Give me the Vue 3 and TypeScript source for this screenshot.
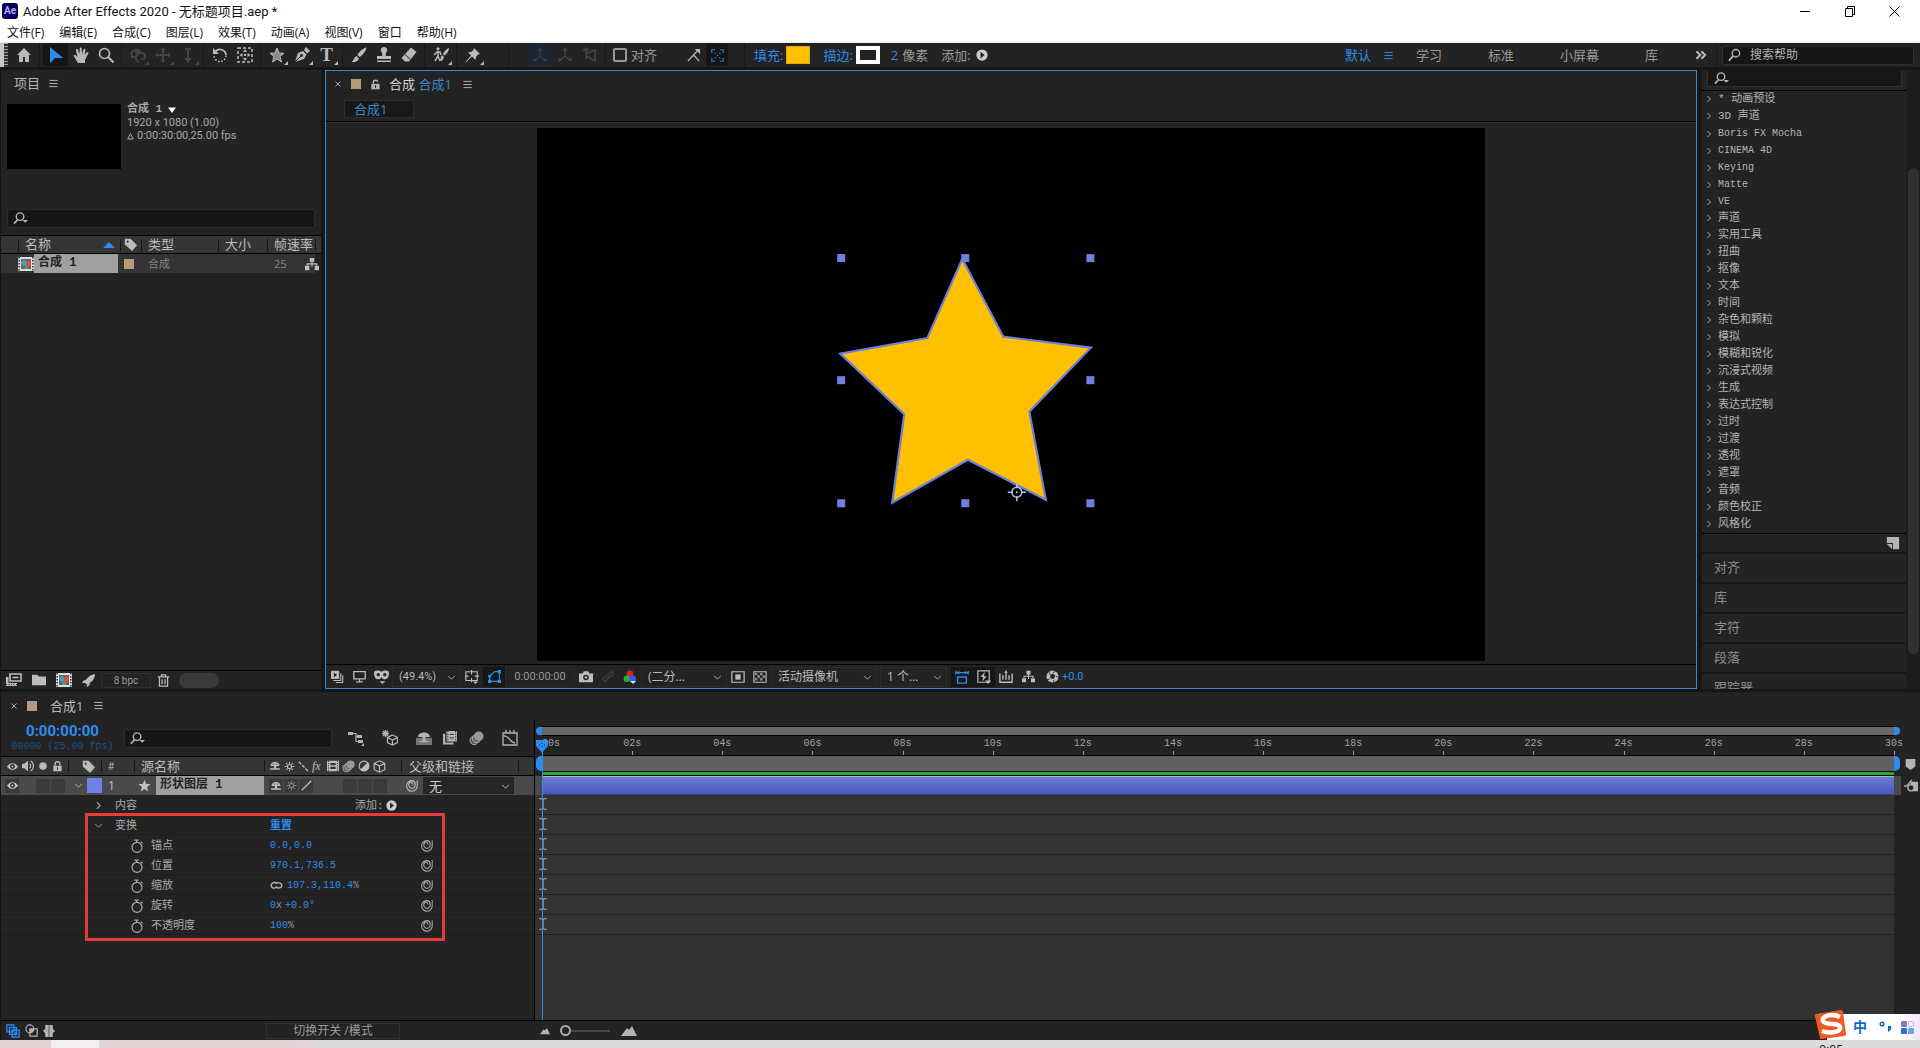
<script setup lang="ts">
import { h, ref } from 'vue'

interface Prop {
  label: string
  kind: 'pair' | 'scale' | 'rotation' | 'percent'
  value: string
}

const glyphs: Record<string, string> = {
  home: '<path fill="currentColor" d="M8 1 1 8h2v7h4v-5h2v5h4V8h2z"/>',
  select: '<path fill="#2d8ceb" d="M2 0v16l5-5h8z"/>',
  hand: '<path fill="currentColor" d="M5 16 1 9.500C0 8 2 7 3 8.500L4.500 10 3 3.500c-.3-1.500 1.500-2 2-.5L6.500 7 6.700 1.500c0-1.500 2-1.500 2 0L9 7l1.500-4.500c.5-1.500 2.200-.8 1.900.6L11.500 8l2-2.500c1-1.200 2.500-.3 1.800 1L12 13v3z"/>',
  zoom: '<circle cx="6.500" cy="6.500" r="5" fill="none" stroke="currentColor" stroke-width="1.600"/><path stroke="currentColor" stroke-width="2" d="m10 10 5.500 5.500"/>',
  search: '<circle cx="9" cy="6" r="4.300" fill="none" stroke="currentColor" stroke-width="1.500"/><path stroke="currentColor" stroke-width="2" d="M6 9 1 14.500"/>',
  searchMenu: '<circle cx="7.500" cy="6" r="4" fill="none" stroke="currentColor" stroke-width="1.500"/><path stroke="currentColor" stroke-width="1.800" d="M5 9 1 13.500"/><path fill="currentColor" d="M10 9.500h6l-3 3z"/>',
  orbit: '<path fill="none" stroke="currentColor" stroke-width="2" d="M11 12c4 1 5-3 3-5S9 6 7 8s-1 6 2 7M2 9C0 5 4 2 8 3M1 10l5 0"/><circle cx="8" cy="5" r="3" fill="currentColor"/>',
  pan: '<path stroke="currentColor" stroke-width="2" d="M8 1v14M1 8h14"/><path fill="currentColor" d="m8 0 2.500 3h-5zM8 16l2.500-3h-5zM0 8l3-2.500v5zM16 8l-3-2.500v5z"/>',
  dolly: '<path stroke="currentColor" stroke-width="1.800" d="M8 3v10M5 2h6"/><path fill="currentColor" d="m8 16 4-5H4zM8 0l2 3H6z"/>',
  rotate: '<path fill="none" stroke="currentColor" stroke-width="1.800" d="M3.500 4.500A6 6 0 0 1 14 8"/><path fill="none" stroke="currentColor" stroke-width="1.600" stroke-dasharray="1.600 1.600" d="M14 8.500A6 6 0 0 1 2 8.500"/><path fill="currentColor" d="M1 1v6h6z"/>',
  anchorTool: '<path fill="none" stroke="currentColor" stroke-width="1.500" stroke-dasharray="3 2" d="M1 1h14v14H1z"/><path fill="currentColor" d="m8 2 2 3H6zM8 14l2-3H6zM2.500 8l3-2v4zM13.500 8l-3-2v4zM7 7h2v2H7z"/>',
  star: '<path fill="#8a8a8a" stroke="currentColor" d="m8 1 2 5 5 .3-4 3.200 1.500 5.500L8 12l-4.500 3L5 9.500 1 6.300 6 6z"/>',
  solidStar: '<path fill="currentColor" d="m8 1 2 5 5.500.3-4.300 3.400 1.500 5.600L8 12.200 3.300 15.300l1.500-5.600L.5 6.300 6 6z"/>',
  pen: '<path fill="currentColor" d="M1 15 4 6l5-2 3.500 3.500L10 12zM10 3l2-3 4 4-3 2.500z"/><circle cx="7.500" cy="8.500" r="1.400" fill="#232323"/><path stroke="#232323" d="m1 15 6-6"/>',
  brush: '<path fill="currentColor" d="M15.500.5C12 1 8 5 6.500 8l2 2C12 8 15 4 15.500.5zM5.500 9 8 11.500C7 15 3 15.500.5 15 3 13.500 3 10 5.500 9z"/>',
  stamp: '<path fill="currentColor" d="M8 0c-3 0-4 3-2.500 5C6.300 6.500 6.500 8 6 9H1v3h14V9h-5c-.5-1-.3-2.500.5-4C12 3 11 0 8 0zM1 13.500h14V15H1z"/>',
  eraser: '<path fill="currentColor" d="m10 .5 5.500 4.500L8 14.500H4L.5 11z"/><path stroke="#232323" d="m4 7.500 5.500 5"/>',
  roto: '<path fill="none" stroke="currentColor" stroke-width="1.500" d="M5 4v5l-3 5M5 9l2 5M1 8l3-3h3l1 3"/><circle cx="5" cy="1.800" r="1.600" fill="currentColor"/><path fill="currentColor" d="M16 1c-3 1-5 4-6 6l1.500 1.500C14 7 16 4 16 1zM9 8l2 2c-1 4-3 4-4.500 4C8 12 7.500 9.500 9 8z"/>',
  pin: '<path fill="currentColor" d="m9 1 6 6-2 .5L11 10l-.5 3L7 9.500 1 15.500l-.500-.5L6 8.500 3 5.500 6 5l2.500-2z"/>',
  axis: '<path stroke="currentColor" stroke-width="1.500" fill="none" d="M8 3v6L3 13M8 9l5 4"/><path fill="currentColor" d="m8 0 2.500 4h-5zM1 14.500l1-4 3 3zM15 14.500l-1-4-3 3z"/>',
  axisView: '<path stroke="currentColor" stroke-width="1.500" fill="none" d="M4 2v10M4 9l9 5V3L4 7M1 4l3-3 3 3"/>',
  snapEdge: '<path stroke="currentColor" stroke-width="1.500" fill="none" d="M1 15 7.500 8 14 15M7.500 8 12 3"/><path fill="currentColor" d="M9 1h6v6z"/>',
  snapBox: '<path fill="none" stroke="currentColor" stroke-width="1.300" d="M1 5V1h4M11 1h4v4M15 11v4h-4M5 15H1v-4"/><path fill="currentColor" d="M4.500 4.500H6V6H4.500zM10 4.500h1.500V6H10zM4.500 10H6v1.500H4.500zM10 10h1.500v1.500H10zM7.200 7.200h1.600v1.600H7.200z"/>',
  playDot: '<circle cx="8" cy="8" r="7.500" fill="currentColor"/><path fill="#232323" d="M6 3.500 11.500 8 6 12.500z"/>',
  menu: '<path stroke="currentColor" stroke-width="1.400" d="M2 3.500h12M2 8h12M2 12.500h12"/>',
  more: '<path fill="none" stroke="currentColor" stroke-width="2.600" d="m2 3 5 5-5 5M8.500 3l5 5-5 5"/>',
  lock: '<path fill="currentColor" d="M2 7h12v8H2z"/><path fill="none" stroke="currentColor" stroke-width="2" d="M5 7V4c0-3 6-3 6 0"/><path stroke="#232323" stroke-width="1.500" d="M8 9v4"/>',
  lockShut: '<path fill="currentColor" d="M2 7h12v8H2z"/><path fill="none" stroke="currentColor" stroke-width="2" d="M4.500 7V4c0-4 7-4 7 0v3"/><path stroke="#333" stroke-width="1.500" d="M8 9v4"/>',
  tag: '<path fill="currentColor" d="M1 1h7l8 8-6 7L1 8z"/><circle cx="4.500" cy="4.500" r="1.300" fill="#333"/>',
  up: '<path fill="#2d8ceb" d="m8 4 8 8H0z"/>',
  down: '<path fill="#fff" d="M0 3h16L8 14z"/>',
  comp: '<path fill="#ddd" d="M0 1h16v14H0z"/><path stroke="#333" stroke-width="1.500" stroke-dasharray="1.500 1.500" d="M1.200 1v14M14.800 1v14"/><path fill="#5d686e" d="M3 3h10v10H3z"/><circle cx="6" cy="7" r="2.800" fill="#3fa3c4"/><path fill="#d9503c" d="M8 5h5v5H8z"/><path fill="#4ea357" d="m8 8 3 5H6z"/>',
  tree: '<path fill="currentColor" d="M5.500 1h5v4.500h-5zM0 10h5v5H0zM11 10h5v5h-5z"/><path fill="none" stroke="currentColor" stroke-width="1.300" d="M8 5v5M2.500 10V7.800h11V10M8 8v3"/>',
  interpret: '<path fill="none" stroke="currentColor" stroke-width="1.600" d="M4 2h11v7H4z"/><path stroke="currentColor" stroke-width="1.500" d="M6.500 5.500h6"/><path fill="currentColor" d="M0 5h2.500v6H11v3H0z"/><path stroke="#232323" stroke-dasharray="1 1.500" d="M0 12.500h11"/>',
  folder: '<path fill="currentColor" d="M0 2h6l2 2h8v10H0z"/>',
  rocket: '<path fill="currentColor" d="M16 0C10 1 7 4 5 7L2 8l-2 3h4l2 2v3l3-2 .5-3C13 9 15.500 6 16 0z"/>',
  trash: '<path fill="none" stroke="currentColor" stroke-width="1.600" d="M1 3.500h14M5.500 3V1h5v2M3 4v11h10V4M6.200 6.500v6M9.800 6.500v6"/>',
  preview: '<path fill="currentColor" d="M0 1h10v10H0z"/><path fill="#232323" d="m3.500 3 4 3-4 3z"/><path fill="none" stroke="currentColor" stroke-width="1.300" d="M12 4v9H3M14.500 6.500v9H6"/>',
  monitor: '<path fill="none" stroke="currentColor" stroke-width="1.600" d="M1 2h14v9H1zM8 11v3.500M4 14.500h8"/>',
  mask: '<path fill="currentColor" d="M0 4c0-3 5-3 8-1 3-2 8-2 8 1 0 5-2 7-5 7-2 0-2-2-3-2s-1 2-3 2c-3 0-5-2-5-7z"/><circle cx="4.500" cy="6" r="1.800" fill="#232323"/><circle cx="11.500" cy="6" r="1.800" fill="#232323"/><path fill="currentColor" d="M6 13h6l-3 3z"/>',
  chevron: '<path fill="none" stroke="currentColor" stroke-width="1.500" d="m2 5 6 6 6-6"/>',
  chevronRight: '<path fill="none" stroke="currentColor" stroke-width="1.900" d="m5 2 6 6-6 6"/>',
  grid: '<path fill="none" stroke="currentColor" stroke-width="1.300" d="M1 2h13v10H1zM7.500 0v5M7.500 9v5M0 7h4M11 7h5"/><path fill="currentColor" d="M9 13h6l-3 3z"/>',
  maskPath: '<path fill="none" stroke="#2d8ceb" stroke-width="1.400" d="M2 14V8l6-6h6v12z"/><path fill="#2d8ceb" d="M0 12h4v4H0zM12 12h4v4h-4zM12 0h4v4h-4zM0 6h4v3H0z"/>',
  camera: '<path fill="currentColor" d="M0 4h4l1.500-2.500h5L12 4h4v10H0z"/><circle cx="8" cy="8.500" r="3.200" fill="#232323"/><circle cx="8" cy="8.500" r="1.500" fill="currentColor"/>',
  link: '<path fill="none" stroke="currentColor" stroke-width="1.700" d="m7 7 3-4c2-2 5 1 3 3L9 9M9 8l-4 5c-2 2-5-1-3-3l4-4"/>',
  rgb: '<circle cx="8" cy="4.500" r="3.800" fill="#e12020"/><circle cx="4.500" cy="10" r="3.800" fill="#1fb432"/><circle cx="11" cy="10" r="3.800" fill="#3555ff"/><path fill="#ddd" d="M8 12.500h7L11.500 16z"/>',
  roi: '<path fill="none" stroke="currentColor" stroke-width="1.400" d="M1 2h14v12H1z"/><path fill="currentColor" d="M5 5h6v6H5z"/>',
  checker: '<path fill="none" stroke="currentColor" stroke-width="1.300" d="M1 2h14v12H1z"/><path fill="#888" d="M2 3h3v3H2zM8 3h3v3H8zM5 6h3v3H5zM11 6h3v3h-3zM2 9h3v3H2zM8 9h3v3H8z"/>',
  aspect: '<path fill="none" stroke="#2d8ceb" stroke-width="1.700" d="M3 8h10v7H3zM1 1v4M15 1v4M1 3h14"/><path fill="#2d8ceb" d="m2 3 3-2.500v5zM14 3l-3-2.500v5z"/>',
  fast: '<path fill="none" stroke="currentColor" stroke-width="1.400" d="M1 1h13v13H1z"/><path fill="currentColor" d="m9 2-5 6h3l-1 5 5-6H8zM9 12h7l-3.500 4z"/>',
  timelineIcon: '<path fill="none" stroke="currentColor" stroke-width="1.600" d="M1 4v10h14V4M4.500 6v5M8 2v9M11.500 6v5"/><path fill="currentColor" d="m8 0 2 3H6z"/>',
  aperture: '<circle cx="8" cy="8" r="5.200" fill="none" stroke="currentColor" stroke-width="4.500"/><path stroke="#232323" d="m8 4 4-3M12 7l4 3M10 12l-1 4M5 11l-4 1M5 6 3 1"/>',
  close: '<path stroke="currentColor" stroke-width="1.800" d="m3 3 10 10M13 3 3 13"/>',
  flow: '<path fill="currentColor" d="M0 2h5v3H0zM9 5h5v3H9zM10 10h5v3h-5z"/><path fill="none" stroke="currentColor" stroke-width="1.200" d="M5 3.500h3v8h3M8 6.500h2"/><path fill="currentColor" d="M13 16l3-3v3z"/>',
  draft3d: '<path fill="none" stroke="currentColor" stroke-width="1.300" d="m10.500 5 5 2.500v5L10.500 15l-5-2.500v-5zM5.500 7.500l5 2.500 5-2.500M10.500 10v5"/><path stroke="currentColor" stroke-width="1.400" d="M3.500 0v7M0 3.500h7M1 1l5 5M6 1 1 6"/>',
  shy: '<path fill="currentColor" d="M2 8c0-7 12-7 12 0H9.500v3h5v2h-13v-2h5V8z"/><path stroke="#232323" d="M5 5.500h2M9 5.500h2"/>',
  shyBar: '<path fill="#777" d="M0 8h16v7H0z"/><path fill="currentColor" d="M2 7c0-6 12-6 12 0H9.500v4h3v1h-9v-1h3V7z"/>',
  frames: '<path fill="currentColor" d="M4 0h12v12H4z"/><path stroke="#232323" stroke-width="1.200" stroke-dasharray="1.500 1.500" d="M5.500 0v12M14.500 0v12"/><path stroke="#232323" d="M7.500 4h5M7.500 8h5"/><path fill="currentColor" d="M0 3h2.500v10H12v2.500H0z"/>',
  film: '<path fill="currentColor" d="M0 1h16v14H0z"/><path stroke="#333" stroke-width="1.300" stroke-dasharray="1.500 1.500" d="M2 1v14M14 1v14"/><path fill="#333" d="M4.500 4h7v3h-7zM4.500 9h7v3h-7z"/>',
  blur: '<circle cx="5.500" cy="10" r="4.500" fill="#555" stroke="currentColor"/><circle cx="8" cy="8" r="4.500" fill="#666" stroke="currentColor"/><circle cx="10.500" cy="5.500" r="5" fill="#999"/>',
  graph: '<path fill="none" stroke="currentColor" stroke-width="1.300" d="M1 3h14v12H1zM4 0v3M8 0v3M12 0v3M1 6c7-1 6 7 12 7"/>',
  eye: '<path fill="currentColor" d="M0 8c4-6.500 12-6.500 16 0-4 6.500-12 6.500-16 0z"/><circle cx="8" cy="8" r="3.500" fill="#303030"/><circle cx="8" cy="8" r="1.300" fill="currentColor"/>',
  speaker: '<path fill="currentColor" d="M0 5h3l5-4v14l-5-4H0z"/><path fill="none" stroke="currentColor" stroke-width="1.600" d="M10 5c2 1 2 5 0 6M11.500 1.500c5 2 5 11 0 13"/>',
  dot: '<circle cx="8" cy="8" r="6" fill="currentColor"/>',
  sun: '<circle cx="8" cy="8" r="3" fill="none" stroke="currentColor" stroke-width="1.500"/><path stroke="currentColor" stroke-width="1.500" d="M8 1v3M8 12v3M1 8h3M12 8h3M3 3l2 2M11 11l2 2M13 3l-2 2M5 11l-2 2"/>',
  quality: '<path stroke="currentColor" stroke-width="2" stroke-dasharray="5 2" d="m1 1 14 14"/>',
  slash: '<path stroke="currentColor" stroke-width="1.800" d="M1 15 15 1"/>',
  adjust: '<circle cx="8" cy="8" r="6.500" fill="none" stroke="currentColor" stroke-width="1.500"/><path fill="currentColor" d="M13 3A7 7 0 1 1 3 13z"/>',
  cube: '<path fill="none" stroke="currentColor" stroke-width="1.400" d="m8 1 6.500 3v8L8 15l-6.500-3V4zM1.500 4 8 7.500 14.500 4M8 7.500V15"/>',
  spiral: '<path fill="none" stroke="currentColor" stroke-width="1.300" d="M15 1.500V8.500A6.500 6.500 0 1 1 8 2c3 0 4.500 2.200 4.500 4.800a4 4 0 1 1-6.500-2.500c2-1 4 .5 3.500 2.700"/>',
  watch: '<circle cx="8" cy="9.500" r="5.700" fill="none" stroke="currentColor" stroke-width="1.400"/><path fill="none" stroke="currentColor" stroke-width="1.500" d="M5 1.200h5M7.500 1v3M12.500 3l2 2"/>',
  chain: '<path fill="none" stroke="currentColor" stroke-width="1.600" d="M9 5.500C7 3.500 1.500 4 1.500 8S7 12 9 9.500M7 9.500c2 2.500 7.500 2 7.500-1.500S9 3.500 7 6"/>',
  beam: '<path fill="none" stroke="currentColor" stroke-width="1.500" d="M3 1h3.500L8 2l1.500-1H13M8 2v12M3 15h3.500L8 14l1.500 1H13"/>',
  shield: '<path fill="currentColor" d="M1 0h14v11l-7 5-7-5z"/>',
  keyNav: '<path fill="currentColor" d="M7 3h9v11H9z"/><circle cx="8" cy="10" r="3.500" fill="#232323" stroke="currentColor" stroke-width="1.500"/><path fill="none" stroke="currentColor" stroke-width="1.500" d="M0 8h3L9 1"/>',
  layers: '<path fill="#17324d" stroke="#2d8ceb" stroke-width="1.400" d="M1 1h8v8H1zM4 4h8v8H4zM7 7h8v8H7z"/><path stroke="#2d8ceb" d="M9 11h4M11 9v4"/>',
  modes: '<circle cx="6" cy="6" r="4.800" fill="none" stroke="currentColor" stroke-width="1.500"/><path fill="none" stroke="currentColor" stroke-width="1.500" d="M6 6h9v9H6z"/><path fill="currentColor" d="M6 6h5c0 3-2 5-5 5z"/>',
  braces: '<path fill="#777" d="M6 0h4v16H6z"/><path fill="currentColor" d="M7 0v16H3v-5L0 8l3-3V0zM9 0v16h4v-5l3-3-3-3V0z"/>',
  hills: '<path fill="currentColor" d="M0 13 6 5l2 2 3-4 5 10z"/>',
  page: '<path fill="currentColor" d="M1 1h14v14H8V8H1z"/><path fill="currentColor" d="M1 9h6v6z"/>',
}

const Icon = (props: { name: string; size?: number }) =>
  h('svg', {
    viewBox: '0 0 16 16',
    width: props.size ?? 16,
    height: props.size ?? 16,
    'aria-hidden': 'true',
    innerHTML: glyphs[props.name] ?? '',
  })
Icon.props = ['name', 'size']

const menus = ['文件(F)', '编辑(E)', '合成(C)', '图层(L)', '效果(T)', '动画(A)', '视图(V)', '窗口', '帮助(H)']

const toolGroups: { name: string; dim?: boolean; fly?: boolean }[][] = [
  [{ name: 'home' }],
  [{ name: 'select' }, { name: 'hand' }, { name: 'zoom' }],
  [{ name: 'orbit', dim: true, fly: true }, { name: 'pan', dim: true, fly: true }, { name: 'dolly', dim: true, fly: true }],
  [{ name: 'rotate' }, { name: 'anchorTool' }],
  [{ name: 'star', fly: true }, { name: 'pen', fly: true }, { name: 'type', fly: true }],
  [{ name: 'brush' }, { name: 'stamp' }, { name: 'eraser' }],
  [{ name: 'roto', fly: true }],
  [{ name: 'pin', fly: true }],
]

const workspaces = ['学习', '标准', '小屏幕', '库']

const effects = [
  '* 动画预设', '3D 声道', 'Boris FX Mocha', 'CINEMA 4D', 'Keying', 'Matte', 'VE', '声道', '实用工具',
  '扭曲', '抠像', '文本', '时间', '杂色和颗粒', '模拟', '模糊和锐化', '沉浸式视频', '生成', '表达式控制',
  '过时', '过渡', '透视', '遮罩', '音频', '颜色校正', '风格化',
]
const isLatin = (s: string) => /^[\x20-\x7e]+$/.test(s)

const sidePanels = ['对齐', '库', '字符', '段落', '跟踪器']

const props: Prop[] = [
  { label: '锚点', kind: 'pair', value: '0.0,0.0' },
  { label: '位置', kind: 'pair', value: '970.1,736.5' },
  { label: '缩放', kind: 'scale', value: '107.3,110.4' },
  { label: '旋转', kind: 'rotation', value: '+0.0' },
  { label: '不透明度', kind: 'percent', value: '100' },
]

const seconds = Array.from({ length: 16 }, (_, i) => String(i * 2).padStart(2, '0') + 's')
const handles = [[304, 130], [428, 130], [553, 130], [304, 252], [553, 252], [304, 375], [428, 375], [553, 375]]
const snapping = ref(false)
const zoomLevel = ref(0)
</script>

<template>
  <div class="app">
    <header class="titlebar">
      <span class="logo">Ae</span>
      <h1>Adobe After Effects 2020 - 无标题项目.aep *</h1>
      <div class="window-buttons">
        <button aria-label="最小化"><svg width="10" height="11"><path d="M0 5.500h10" stroke="#000" /></svg></button>
        <button aria-label="还原"><svg width="10" height="11"><path d="M.5 2.500h7v8h-7zM2.500 2.500v-2h7v8h-2" fill="none" stroke="#000" /></svg></button>
        <button aria-label="关闭"><svg width="11" height="11"><path d="m.5.5 10 10M10.500.5l-10 10" stroke="#000" /></svg></button>
      </div>
    </header>
    <nav class="menubar">
      <button v-for="m in menus" :key="m">{{ m }}</button>
    </nav>

    <div class="toolbar">
      <span class="grip"></span>
      <template v-for="(group, gi) in toolGroups" :key="gi">
        <span v-if="gi" class="sep"></span>
        <button
          v-for="t in group"
          :key="t.name"
          class="tool"
          :class="{ dim: t.dim, active: t.name === 'select', fly: t.fly }"
          :aria-label="t.name"
        >
          <span v-if="t.name === 'type'" class="type-glyph">T</span>
          <Icon v-else :name="t.name" />
        </button>
      </template>
      <span class="sep wide"></span>
      <button class="tool dim boxed" aria-label="本地轴"><Icon name="axis" /></button>
      <button class="tool dim" aria-label="世界轴"><Icon name="axis" /></button>
      <button class="tool dim" aria-label="视图轴"><Icon name="axisView" /></button>
      <span class="sep"></span>
      <label class="snap"><input v-model="snapping" type="checkbox" />对齐</label>
      <button class="tool snap-edge" aria-label="边缘对齐"><Icon name="snapEdge" :size="14" /></button>
      <button class="tool active blue" aria-label="对齐范围"><Icon name="snapBox" :size="13" /></button>
      <span class="sep shape-sep"></span>
      <button class="link-text">填充:</button>
      <button class="swatch fill" aria-label="填充颜色"></button>
      <button class="link-text stroke-label">描边:</button>
      <button class="swatch stroke" aria-label="描边颜色"></button>
      <span class="px"><b>2</b>像素</span>
      <span class="add">添加:<Icon name="playDot" :size="12" /></span>

      <div class="workspaces">
        <button class="current">默认<Icon name="menu" :size="11" /></button>
        <button v-for="w in workspaces" :key="w" class="space">{{ w }}</button>
        <button class="more" aria-label="更多"><Icon name="more" :size="12" /></button>
        <span class="sep"></span>
        <label class="help"><Icon name="search" :size="14" /><input type="text" placeholder="搜索帮助" aria-label="搜索帮助" /></label>
      </div>
    </div>

    <main class="upper">
      <section class="project">
        <div class="panel-tab"><h2>项目</h2><Icon name="menu" :size="11" /></div>
        <div class="preview">
          <div class="thumb"></div>
          <div class="info">
            <strong>合成 1 <Icon name="down" :size="8" /></strong>
            <span>1920 x 1080 (1.00)</span>
            <span><svg width="7" height="8" viewBox="0 0 7 8"><path d="M3.500 1.500.8 7h5.400z" fill="none" stroke="currentColor" /></svg>0:00:30:00,25.00 fps</span>
          </div>
        </div>
        <label class="search"><Icon name="searchMenu" :size="15" /><input type="text" aria-label="搜索项目" /></label>
        <table class="items">
          <thead>
            <tr>
              <th class="c-pad"></th>
              <th class="c-name"><span>名称</span><Icon name="up" :size="12" /></th>
              <th class="c-tag"><Icon name="tag" :size="13" /></th>
              <th class="c-type">类型</th>
              <th class="c-size">大小</th>
              <th class="c-rate">帧速率</th>
              <th class="c-end"></th>
            </tr>
          </thead>
          <tbody>
            <tr>
              <td></td>
              <td class="c-name"><Icon name="comp" :size="16" /><strong>合成 1</strong></td>
              <td class="c-tag"><i class="label-swatch"></i></td>
              <td>合成</td>
              <td></td>
              <td>25</td>
              <td class="c-end"><Icon name="tree" :size="14" /></td>
            </tr>
          </tbody>
        </table>
        <footer class="project-foot">
          <button aria-label="解释素材"><Icon name="interpret" /></button>
          <button aria-label="新建文件夹"><Icon name="folder" :size="14" /></button>
          <button aria-label="新建合成"><Icon name="comp" /></button>
          <button aria-label="项目设置"><Icon name="rocket" :size="13" /></button>
          <button class="bpc">8 bpc</button>
          <button aria-label="删除"><Icon name="trash" :size="13" /></button>
          <span class="pill"></span>
        </footer>
      </section>

      <section class="comp">
        <div class="comp-tab">
          <Icon name="close" :size="8" />
          <i class="label-swatch"></i>
          <Icon name="lock" :size="11" />
          <h2>合成 <em>合成1</em></h2>
          <Icon name="menu" :size="11" />
        </div>
        <div class="crumbs"><button>合成1</button></div>
        <div class="viewer">
          <svg class="canvas" viewBox="0 0 947 533">
            <path
              d="M425 131 466 208.500 553.500 219.500 492 283.500 508.500 371.500 430.500 331.500 355 374.500 367 286 303 225.500 390 210z"
              fill="#ffc000" stroke="#6f7fd6" stroke-width="2.200"
            />
            <rect v-for="([x, y], i) in handles" :key="i" :x="x - 4" :y="y - 4" width="8" height="8" fill="#6f80dc" />
            <g fill="none" stroke="#b9c0e8" stroke-width="1.500">
              <circle cx="479.500" cy="364" r="5" />
              <path d="M479.500 355v5M479.500 368v5M470.500 364h5M483.500 364h5" />
            </g>
            <circle cx="479.500" cy="364" r="2.500" fill="#000" />
            <circle cx="479.500" cy="364" r="1" fill="#b9c0e8" />
          </svg>
        </div>
        <footer class="comp-foot">
          <button class="ib" aria-label="始终预览"><Icon name="preview" :size="13" /></button>
          <button class="ib" aria-label="主查看器"><Icon name="monitor" :size="13" /></button>
          <button class="ib" aria-label="眼镜"><Icon name="mask" :size="15" /></button>
          <span class="pick zoom-pick"><select aria-label="放大率"><option>(49.4%)</option></select><Icon name="chevron" :size="9" /></span>
          <button class="ib" aria-label="网格"><Icon name="grid" :size="14" /></button>
          <button class="ib active" aria-label="蒙版"><Icon name="maskPath" :size="13" /></button>
          <button class="time-box">0:00:00:00</button>
          <button class="ib" aria-label="快照"><Icon name="camera" :size="14" /></button>
          <button class="ib dim" aria-label="显示快照"><Icon name="link" :size="13" /></button>
          <button class="ib" aria-label="通道"><Icon name="rgb" :size="14" /></button>
          <span class="pick res-pick"><select aria-label="分辨率"><option>(二分…</option></select><Icon name="chevron" :size="9" /></span>
          <button class="ib" aria-label="目标区域"><Icon name="roi" :size="14" /></button>
          <button class="ib" aria-label="透明网格"><Icon name="checker" :size="14" /></button>
          <span class="pick cam-pick"><select aria-label="3D 视图"><option>活动摄像机</option></select><Icon name="chevron" :size="9" /></span>
          <span class="pick view-pick"><select aria-label="视图布局"><option>1 个…</option></select><Icon name="chevron" :size="9" /></span>
          <button class="ib active" aria-label="像素长宽比"><Icon name="aspect" :size="14" /></button>
          <button class="ib active" aria-label="快速预览"><Icon name="fast" :size="14" /></button>
          <button class="ib" aria-label="时间轴"><Icon name="timelineIcon" :size="14" /></button>
          <button class="ib" aria-label="流程图"><Icon name="tree" :size="13" /></button>
          <button class="ib exposure" aria-label="重置曝光度"><Icon name="aperture" :size="13" /></button>
          <span class="ev">+0.0</span>
        </footer>
      </section>

      <aside class="side">
        <div class="side-main">
          <label class="side-search"><Icon name="searchMenu" :size="15" /><input type="text" aria-label="搜索效果" /></label>
          <ul class="effects">
            <li v-for="e in effects" :key="e" :class="{ latin: isLatin(e) }"><Icon name="chevronRight" :size="8" />{{ e }}</li>
          </ul>
          <div class="side-new"><Icon name="page" :size="14" /></div>
          <button v-for="p in sidePanels" :key="p" class="side-panel">{{ p }}</button>
        </div>
        <div class="scroll"><span></span></div>
      </aside>
    </main>

    <section class="lower">
      <div class="tl-tab">
        <Icon name="close" :size="8" />
        <i class="label-swatch"></i>
        <h2>合成1</h2>
        <Icon name="menu" :size="11" />
      </div>
      <div class="tl-body">
        <div class="tl-left">
          <div class="tl-tools">
            <div class="clock"><b>0:00:00:00</b><small>00000 (25.00 fps)</small></div>
            <label class="search"><Icon name="searchMenu" :size="15" /><input type="text" aria-label="搜索图层" /></label>
            <button aria-label="合成微型流程图"><Icon name="flow" /></button>
            <button class="apart" aria-label="草图 3D"><Icon name="draft3d" /></button>
            <button class="apart" aria-label="隐藏图层"><Icon name="shyBar" /></button>
            <button aria-label="帧混合"><Icon name="frames" :size="14" /></button>
            <button aria-label="运动模糊"><Icon name="blur" :size="15" /></button>
            <button class="apart" aria-label="图表编辑器"><Icon name="graph" :size="16" /></button>
          </div>
          <div class="tl-head">
            <span class="h-av"><Icon name="eye" :size="11" /><Icon name="speaker" :size="12" /><Icon name="dot" :size="10" /><Icon name="lockShut" :size="11" /></span>
            <span class="h-tag"><Icon name="tag" :size="13" /></span>
            <span class="h-num">#</span>
            <span class="h-name">源名称</span>
            <span class="h-sw">
              <Icon name="shy" :size="12" /><Icon name="sun" :size="11" /><Icon name="quality" :size="11" /><i class="fx">fx</i>
              <Icon name="film" :size="12" /><Icon name="blur" :size="13" /><Icon name="adjust" :size="12" /><Icon name="cube" :size="13" />
            </span>
            <span class="h-parent">父级和链接</span>
          </div>
          <div class="layer">
            <span class="l-av"><i class="cell"><Icon name="eye" :size="11" /></i><i class="cell"></i><i class="cell"></i></span>
            <Icon class="twirl" name="chevron" :size="9" />
            <i class="layer-color"></i>
            <span class="l-num">1</span>
            <Icon name="solidStar" :size="13" />
            <strong class="l-name">形状图层 1</strong>
            <span class="l-sw">
              <i class="cell"><Icon name="shy" :size="12" /></i><i class="cell faint"><Icon name="sun" :size="11" /></i><i class="cell"><Icon name="slash" :size="11" /></i>
            </span>
            <span class="l-extra"><i class="cell"></i><i class="cell"></i><i class="cell"></i></span>
            <Icon name="spiral" :size="13" />
            <span class="pick parent-pick"><select aria-label="父级和链接"><option>无</option></select><Icon name="chevron" :size="9" /></span>
          </div>
          <div class="row group">
            <Icon name="chevronRight" :size="9" /><span>内容</span>
            <span class="row-add">添加:<Icon name="playDot" :size="11" /></span>
          </div>
          <div class="row group">
            <Icon name="chevron" :size="9" /><span class="g-label">变换</span>
            <button class="reset">重置</button>
          </div>
          <div v-for="p in props" :key="p.label" class="row prop">
            <Icon name="watch" :size="14" />
            <span class="p-label">{{ p.label }}</span>
            <span class="p-value">
              <Icon v-if="p.kind === 'scale'" class="chain" name="chain" :size="13" />
              <template v-if="p.kind === 'rotation'">0<u>x</u></template><span :class="{ turns: p.kind === 'rotation' }">{{ p.value }}</span><template v-if="p.kind === 'rotation'">°</template><u v-if="p.kind === 'scale' || p.kind === 'percent'">%</u>
            </span>
            <Icon class="whip" name="spiral" :size="13" />
          </div>
          <div class="highlight"></div>
        </div>

        <div class="tl-right">
          <div class="nav-bar"><i></i></div>
          <ol class="ruler"><li v-for="s in seconds" :key="s"><span>{{ s }}</span></li></ol>
          <div class="work-bar"><i></i><Icon name="shield" :size="11" /></div>
          <div class="cache"></div>
          <div class="track"><div class="clip"></div><Icon name="keyNav" :size="14" /></div>
          <div v-for="n in 7" :key="n" class="lane"><Icon name="beam" :size="12" /></div>
          <div class="rest"></div>
          <div class="playhead"><svg width="12" height="13" viewBox="0 0 12 13"><path d="M0 0h12v6l-6 7-6-7z" fill="#2d8ceb" /><path d="M3 5h1M6 3v1M8 5h1M6 6v1" stroke="#123" /></svg></div>
        </div>
      </div>
      <footer class="tl-foot">
        <button aria-label="图层开关"><Icon name="layers" :size="14" /></button>
        <button aria-label="转换控制"><Icon name="modes" :size="13" /></button>
        <button aria-label="入点出点"><Icon name="braces" :size="12" /></button>
        <button class="toggle">切换开关 /模式</button>
        <Icon class="hill-s" name="hills" :size="10" />
        <input v-model="zoomLevel" type="range" min="0" max="100" aria-label="时间轴缩放" />
        <Icon name="hills" :size="16" />
      </footer>
    </section>

    <div class="taskbar"><span>9:05</span></div>

    <div class="ime">
      <svg width="32" height="32" viewBox="0 0 32 32">
        <path d="M1 5 26 1c1 0 2 1 2 2l3 22c0 1-1 2-2 2L7 30c-1 0-2 0-2-1L0 7c0-1 0-2 1-2z" fill="#ee5a24" />
        <path d="M25 8C17 4 6 7 8 12s16 1 17 6-10 7-18 4" fill="none" stroke="#fff" stroke-width="4.500" />
      </svg>
      <b>中</b>
      <svg width="14" height="12" viewBox="0 0 14 12"><circle cx="3" cy="3" r="1.800" fill="none" stroke="#1168c4" stroke-width="1.500" /><path d="M9 5h3c1 3-1 5-3 6z" fill="#1168c4" /></svg>
      <svg width="13" height="13" viewBox="0 0 13 13"><rect width="6" height="6" rx="1" fill="#7a7ccc" /><rect x="7.500" y=".5" width="5" height="5" rx="1" fill="none" stroke="#c7a8e8" /><rect y="7" width="6" height="6" rx="1" fill="#2a6fc0" /><rect x="7" y="7" width="6" height="6" rx="1" fill="#6aa5ea" /></svg>
    </div>
  </div>
</template>

<style>
body {
  margin: 0;
  background: #161616;
}
</style>

<style scoped>
.app {
  --ui: 'Open Sans', 'Noto Sans CJK SC', sans-serif;
  --num: Roboto, 'Noto Sans CJK SC', sans-serif;
  --mono: 'Liberation Mono', 'Noto Sans CJK SC', monospace;
  --blue: #2d8ceb;
  --bg: #232323;
  position: relative;
  display: flex;
  flex-direction: column;
  height: 100vh;
  overflow: hidden;
  background: #161616;
  color: #b4b4b4;
  font: 13px/16px var(--ui);
}
.app * { box-sizing: border-box; }
button, input, select {
  margin: 0;
  padding: 0;
  border: 0;
  outline: 0;
  background: none;
  color: inherit;
  font: inherit;
}
button { display: flex; align-items: center; justify-content: center; flex: none; white-space: nowrap; }
svg { flex: none; display: block; }
h1, h2 { margin: 0; font-size: inherit; font-weight: 400; white-space: nowrap; }
ul, ol { margin: 0; padding: 0; list-style: none; }
i, em { font-style: normal; }

.titlebar { display: flex; align-items: center; height: 22px; flex: none; padding-left: 2px; background: #fff; color: #111; }
.logo { width: 16px; height: 16px; margin-right: 5px; border-radius: 3px; background: #00005b; color: #b3a5ff; font: bold 10px/15px var(--num); text-align: center; }
.titlebar h1 { padding-top: 2px; font: 13px/16px var(--num); }
.window-buttons { display: flex; margin-left: auto; margin-right: 3px; }
.window-buttons button { width: 45px; height: 20px; }
.menubar { display: flex; gap: 15px; height: 21px; flex: none; padding: 2px 7px 0; border-bottom: 1px solid #e8f0ee; background: #fff; color: #111; font-size: 12px; }

.toolbar { display: flex; align-items: center; height: 26px; flex: none; background: var(--bg); border-bottom: 2px solid #161616; color: #9a9a9a; white-space: nowrap; }
.grip { width: 8px; height: 100%; margin-right: 3px; background: repeating-linear-gradient(#999 0 1px, #333 1px 3px); border-left: 4px solid #c8c8c8; }
.sep { width: 7px; height: 24px; flex: none; background: linear-gradient(#181818, #181818) 3px 0 / 1px 100% no-repeat; }
.sep.wide { margin: 0 15px 0 20px; }
.tool { position: relative; width: 25px; height: 22px; color: #b9b9b9; }
.tool.dim { color: #444; }
.tool.active { background: #151515; border-radius: 2px; }
.tool.blue { width: 22px; color: #2d7fd0; }
.tool.boxed { background: #1c2530; color: #24405e; }
.tool.fly::after { content: ''; position: absolute; right: 1px; bottom: 1px; border: 2px solid; border-color: transparent currentColor currentColor transparent; }
.type-glyph { font: bold 19px/22px 'Liberation Serif', serif; }
.snap { display: flex; align-items: center; gap: 4px; margin-left: 4px; }
.snap input { appearance: none; width: 14px; height: 14px; border: 2px solid #999; border-radius: 2px; }
.snap-edge { margin-left: 24px; }
.shape-sep { margin: 0 6px 0 13px; }
.link-text { color: var(--blue); }
.swatch { width: 24px; height: 18px; margin-left: 3px; border: 1px solid #aaa; }
.swatch.fill { background: #ffc000; border-color: #d8a820; }
.swatch.stroke { border: 4px solid #fff; background: #222; }
.stroke-label { margin-left: 13px; }
.px { margin-left: 11px; }
.px b { margin-right: 4px; color: var(--blue); font-weight: 400; }
.add { display: flex; align-items: center; gap: 5px; margin-left: 13px; }
.add svg { color: #ccc; }
.workspaces { display: flex; align-items: center; margin-left: auto; padding-right: 6px; }
.current { gap: 12px; color: var(--blue); }
.space { padding: 0 22px; margin-right: 2px; }
.more { width: 24px; margin-left: 7px; color: #bbb; }
.help { display: flex; align-items: center; gap: 8px; width: 192px; height: 19px; margin-left: 2px; padding-left: 5px; background: #151515; border: 1px solid #303030; border-radius: 2px; color: #bbb; font-size: 12px; }
input { min-width: 0; width: 100%; }
input::placeholder { color: #b4b4b4; opacity: 1; }

.upper { display: flex; flex: 623 1 0; min-height: 0; padding-top: 1px; }
.project { display: flex; flex-direction: column; width: 320px; flex: none; margin: 0 4px 3px 1px; background: var(--bg); }
.panel-tab { display: flex; align-items: center; gap: 8px; height: 26px; margin-bottom: 8px; padding-left: 13px; }
.preview { display: flex; gap: 6px; height: 105px; padding-left: 6px; }
.thumb { width: 114px; height: 65px; background: #000; }
.info { display: flex; flex-direction: column; margin-top: -1px; font: 11px/13px var(--num); color: #a8a8a8; }
.info strong { display: flex; align-items: center; gap: 6px; font: bold 11px/13px var(--mono); }
.info span { display: flex; gap: 3px; align-items: center; }
.search { display: flex; align-items: center; gap: 6px; height: 19px; flex: none; padding-left: 5px; background: #161616; border: 1px solid #2d2d2d; border-radius: 2px; }
.project .search { margin: 0 6px 7px 6px; }
.items { width: 100%; table-layout: fixed; border-collapse: collapse; border-top: 1px solid #000; white-space: nowrap; }
.items th { height: 18px; padding: 0 0 0 7px; background: #353535; border-bottom: 1px solid #000; font-weight: 400; line-height: 17px; text-align: left; color: #bcbcbc; background-image: linear-gradient(#161616, #161616); background-size: 1px 12px; background-repeat: no-repeat; background-position: 0 3px; }
.items td { height: 18px; padding: 0 0 0 7px; background: #333; color: #858585; font-size: 11px; line-height: 17px; }
.items .c-pad { width: 17px; background-image: none; }
.c-name { width: 102px; }
.items th.c-name span { display: inline-block; width: 78px; }
.items th svg { display: inline-block; vertical-align: -2px; }
.items td.c-name { padding: 0; }
.items td.c-name svg { display: inline-block; vertical-align: middle; }
.items td.c-name strong { display: inline-block; width: 84px; padding-left: 4px; vertical-align: top; background: #a0a0a0; color: #222; font: bold 12px/19px var(--mono); }
.items .c-tag { width: 21px; padding-left: 4px; }
.c-type { width: 77px; }
.c-size { width: 49px; }
.c-rate { width: 48px; }
.items td.c-end { padding: 0; background: var(--bg); color: #c0c0c0; }
.items td.c-end svg { margin-left: -10px; }
.label-swatch { display: block; width: 10px; height: 10px; background: #b09c78; }
.project-foot { display: flex; align-items: center; height: 19px; margin-top: auto; border-top: 1px solid #000; color: #bcbcbc; }
.project-foot button { width: 25px; }
.project-foot .bpc { width: 50px; height: 15px; border: 1px solid #303030; font: 10px/13px var(--num); color: #9a9a9a; }
.pill { width: 40px; height: 15px; margin-left: 3px; border-radius: 8px; background: #3a3a3a; }

.comp { display: flex; flex-direction: column; flex: 1; min-width: 0; margin: 0 5px 3px 0; border: 1px solid #3b85c9; background: var(--bg); }
.comp-tab { display: flex; align-items: center; height: 26px; padding-left: 8px; }
.comp-tab h2 { margin: 0 10px 0 8px; color: #d0d0d0; }
.comp-tab em { color: #3b85c9; }
.comp-tab .label-swatch, .tl-tab .label-swatch { margin: 0 9px; }
.crumbs { height: 25px; padding: 3px 0 0 18px; border-bottom: 1px solid #000; }
.crumbs button { width: 70px; height: 18px; justify-content: flex-start; padding-left: 9px; background: #181818; border: 1px solid #2c2c2c; color: #3b85c9; }
.viewer { display: flex; justify-content: center; flex: 1; min-height: 0; padding: 5px 0 3px; border-top: 1px solid #333; }
.canvas { height: 100%; width: auto; aspect-ratio: 947 / 533; background: #000; }
.comp-foot { display: flex; align-items: center; height: 24px; flex: none; border-top: 1px solid #000; color: #bcbcbc; font-size: 12px; white-space: nowrap; }
.ib { width: 22px; height: 20px; }
.ib.active { background: #171717; }
.ib.dim { color: #3d3d3d; }
.comp-foot .exposure { width: 20px; margin-left: 3px; }
.ev { font: 11px/16px var(--num); color: var(--blue); }
.pick { position: relative; display: block; height: 20px; flex: none; border: 1px solid #2c2c2c; }
.pick select { appearance: none; display: block; width: 100%; height: 18px; padding-left: 6px; }
.pick svg { position: absolute; right: 4px; top: 5px; pointer-events: none; }
.zoom-pick { width: 69px; font: 11px/16px var(--num); }
.time-box { width: 70px; height: 20px; border: 1px solid #2a2a2a; font: 11px/16px var(--num); color: #999; }
.res-pick { width: 86px; }
.cam-pick { width: 106px; margin-right: 3px; }
.view-pick { width: 67px; margin-right: 4px; }
.comp-foot .ib:first-child { margin-left: 0; }

.side { display: flex; width: 218px; flex: none; margin-bottom: 3px; background: #1c1c1c; }
.side-main { display: flex; flex-direction: column; flex: 1; min-width: 0; overflow: hidden; background: var(--bg); margin-right: 1px; }
.side-search { display: flex; align-items: center; gap: 6px; height: 17px; flex: none; margin: 0 4px 3px 5px; padding-left: 6px; background: #171717; border: 1px solid #303030; border-top: 0; }
.effects { flex: none; border-top: 1px solid #000; border-bottom: 1px solid #000; font: 11px/16px var(--mono); }
.effects li { display: flex; align-items: center; gap: 5px; height: 17px; padding-left: 3px; border-bottom: 1px solid #1f1f1f; }
.effects .latin { padding-top: 1px; font-size: 10px; }
.side-new { display: flex; align-items: center; justify-content: flex-end; height: 18px; flex: none; padding-right: 6px; }
.side-panel { justify-content: flex-start; height: 30px; padding: 0 0 2px 12px; border-top: 2px solid #181818; color: #8e8e8e; }
.scroll { width: 13px; padding: 98px 1px 0; }
.scroll span { display: block; height: 486px; border-radius: 6px; background: #303030; }

.lower { display: flex; flex-direction: column; flex: 348 1 0; min-height: 0; background: var(--bg); border-left: 1px solid #161616; }
.tl-tab { display: flex; align-items: center; height: 28px; flex: none; padding: 0 0 1px 9px; color: #bcbcbc; }
.tl-tab h2 { margin: 0 10px 0 4px; }
.tl-body { display: flex; flex: 1; min-height: 0; }
.tl-left { position: relative; width: 534px; flex: none; border-right: 1px solid #000; }
.tl-tools { display: flex; align-items: center; height: 36px; color: #b4b4b4; }
.clock { display: flex; flex-direction: column; align-items: center; width: 123px; line-height: 16px; }
.clock b { color: var(--blue); font: bold 15px/16px var(--num); }
.clock small { color: #1f5183; font: 10px/15px var(--mono); }
.tl-tools .search { width: 208px; margin-right: 11px; }
.tl-tools button { width: 26px; }
.tl-tools .apart { margin-left: 8px; }
.tl-head { display: flex; align-items: center; height: 20px; border: 1px solid #000; border-width: 1px 0; background: #353535; color: #bcbcbc; }
.tl-head > span { display: flex; align-items: center; height: 12px; border-right: 1px solid #161616; }
.h-av { width: 68px; gap: 4px; padding-left: 6px; }
.tl-head .h-tag { width: 33px; padding-left: 13px; }
.tl-head .h-num { width: 33px; padding-left: 6px; font-size: 10px; }
.tl-head .h-name { width: 130px; padding-left: 6px; }
.tl-head .h-sw { width: 137px; gap: 3px; padding-left: 4px; }
.fx { width: 12px; font: italic 12px/12px 'Liberation Serif', serif; }
.tl-head .h-parent { width: 117px; padding-left: 7px; }
.layer { display: flex; align-items: center; height: 19px; background: #4a4a4a; color: #c0c0c0; }
.cell { display: flex; align-items: center; justify-content: center; width: 14px; height: 14px; background: #3a3a3a; }
.l-av, .l-sw, .l-extra { display: flex; gap: 1px; }
.l-av { width: 73px; padding-left: 4px; }
.l-av .cell:nth-child(2) { margin-left: 16px; }
.layer-color { width: 15px; height: 15px; margin-left: 4px; background: #6f80e6; }
.l-num { width: 36px; padding-left: 6px; font-size: 12px; }
.l-name { width: 108px; margin: 0 5px; padding-left: 4px; background: #a0a0a0; color: #222; font: bold 12px/19px var(--mono); }
.faint { color: #888; }
.l-extra { margin: 0 18px 0 30px; }
.parent-pick { width: 91px; height: 17px; margin-left: 5px; background: #262626; border: 0; color: #d0d0d0; }
.row { display: flex; align-items: center; height: 20px; padding-top: 2px; border-bottom: 1px solid #1d1d1d; color: #a8a8a8; font: 11px/16px var(--mono); }
.group { gap: 12px; padding-left: 93px; }
.row-add { display: flex; align-items: center; gap: 2px; margin-left: 206px; }
.row-add svg { color: #ccc; }
.g-label { width: 143px; }
.reset { color: var(--blue); font-weight: 700; }
.prop { padding-left: 129px; }
.p-label { width: 126px; padding-left: 7px; }
.p-value { display: flex; align-items: center; width: 150px; font-size: 10px; color: var(--blue); }
.p-value u { text-decoration: none; color: #8a9aaa; }
.turns { padding-left: 3px; }
.chain { margin-right: 4px; color: #b4b4b4; }
.highlight { position: absolute; left: 84px; top: 93px; width: 360px; height: 128px; border: 3px solid #e83c3c; pointer-events: none; }

.tl-right { position: relative; display: flex; flex-direction: column; flex: 1; min-width: 0; padding-top: 6px; }
.nav-bar, .work-bar { position: relative; margin: 0 26px 0 7px; border: 1px solid #000; border-width: 1px 0; flex: none; }
.nav-bar { height: 10px; background: #686868; }
.work-bar { height: 17px; background: #606060; }
.nav-bar i::before, .nav-bar i::after, .work-bar i::before, .work-bar i::after { content: ''; position: absolute; top: 0; bottom: 0; width: 6px; background: var(--blue); }
.nav-bar i::before, .work-bar i::before { left: -6px; border-radius: 5px 0 0 5px; }
.nav-bar i::after, .work-bar i::after { right: -6px; border-radius: 0 5px 5px 0; }
.work-bar svg { position: absolute; right: -22px; top: 3px; color: #b4b4b4; }
.ruler { display: flex; justify-content: space-between; height: 19px; flex: none; margin: 0 26px 0 7px; padding-top: 1px; font: 10px/14px var(--mono); color: #a0a0a0; }
.ruler li { display: flex; justify-content: center; width: 0; position: relative; }
.ruler li:first-child { justify-content: flex-start; }
.ruler li::after { content: ''; position: absolute; left: 0; bottom: 0; width: 1px; height: 4px; background: #999; }
.cache { height: 4px; flex: none; margin: 0 26px 0 7px; background: #23b02c; border-bottom: 1px solid #000; }
.track { position: relative; height: 19px; flex: none; margin-right: 19px; padding: 0 7px; background: #4a4a4a; }
.track svg { position: absolute; right: -17px; top: 3px; color: #b4b4b4; }
.clip { height: 19px; background: linear-gradient(#6c7dd0, #4658c4); border: 1px solid #a4aee8; border-width: 1px 0 0; border-bottom: 1px solid #3c4270; }
.lane { height: 20px; flex: none; margin-right: 26px; padding: 3px 0 0 2px; background: #333; border-bottom: 1px solid #222; color: #b4b4b4; }
.rest { flex: 1; margin-right: 26px; background: #323232; }
.playhead { position: absolute; left: 1px; top: 20px; bottom: 0; width: 13px; }
.playhead::after { content: ''; position: absolute; left: 6px; top: 10px; bottom: 0; width: 1px; background: var(--blue); }

.tl-foot { display: flex; align-items: center; height: 20px; flex: none; padding-left: 3px; border-top: 1px solid #000; color: #b4b4b4; }
.tl-foot button { width: 18px; height: 16px; }
.tl-foot .toggle { width: 134px; margin-left: 208px; border: 1px solid #303030; font-size: 12px; color: #9a9a9a; }
.hill-s { margin: 0 10px 0 140px; }
.tl-foot input { appearance: none; width: 50px; height: 12px; margin-right: 11px; background: linear-gradient(#484848, #484848) 0 5px / 100% 2px no-repeat; }
.tl-foot input::-webkit-slider-thumb { appearance: none; width: 11px; height: 11px; border: 2px solid #aaa; border-radius: 50%; background: var(--bg); }

.taskbar { height: 8px; flex: none; overflow: hidden; background: linear-gradient(90deg, #e4d4d8 51px, #f3f0f1 51px 99px, #e4d4d8 99px 300px, #dadada 330px); color: #111; }
.taskbar span { display: block; padding: 2px 77px 0 0; text-align: right; font-size: 12px; }
.ime { position: absolute; right: 0; bottom: 8px; display: flex; align-items: center; gap: 8px; height: 26px; padding-right: 6px; background: linear-gradient(90deg, transparent 12px, #fff 12px 84px, #f4e4fa); }
.ime svg:first-child { margin-top: -4px; }
.ime b { margin: 0 4px 0 -2px; color: #1168c4; font-size: 14px; }
</style>
